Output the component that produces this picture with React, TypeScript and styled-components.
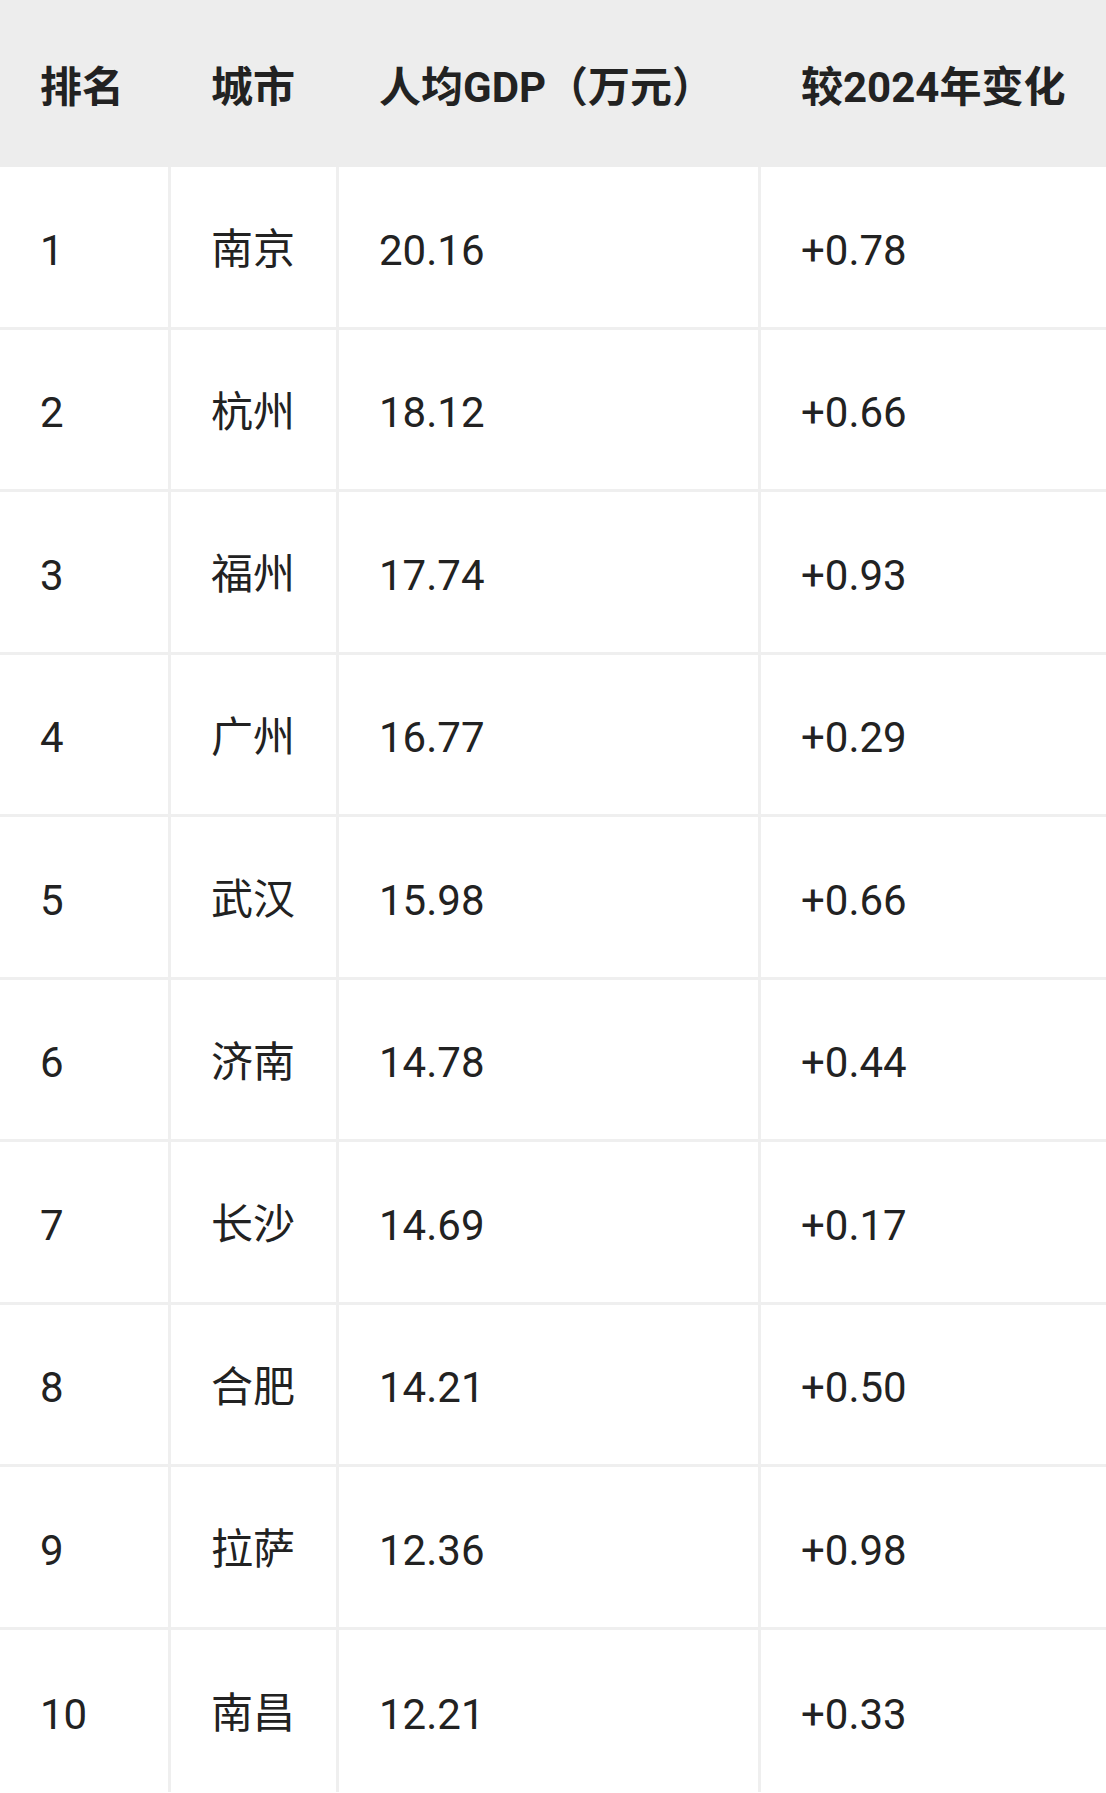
import React from "react";
import styled, { createGlobalStyle } from "styled-components";

const GlobalStyle = createGlobalStyle`
  html, body {
    margin: 0;
    padding: 0;
    background: #ffffff;
  }
  body {
    font-family: "Roboto", "Noto Sans CJK SC", "Noto Sans", sans-serif;
    color: #222222;
  }
`;

const Table = styled.div`
  width: 1106px;
  display: flex;
  flex-direction: column;
`;

const Row = styled.div<{ $header?: boolean }>`
  display: grid;
  grid-template-columns: 171px 168px 422px 1fr;
  box-sizing: border-box;
  height: ${(p) => (p.$header ? "167px" : "162.5px")};
  background: ${(p) => (p.$header ? "#ededed" : "#ffffff")};
  border-bottom: ${(p) => (p.$header ? "none" : "3px solid #efefef")};
  &:last-child {
    border-bottom: none;
  }
`;

const Cell = styled.div<{ $header?: boolean; $last?: boolean; $num?: boolean }>`
  display: flex;
  align-items: center;
  box-sizing: border-box;
  padding-left: 40px;
  padding-top: ${(p) => (p.$num ? "7px" : p.$header ? "0" : "0")};
  padding-bottom: ${(p) => (!p.$num && !p.$header ? "2px" : "0")};
  font-size: 42px;
  font-weight: ${(p) => (p.$header ? 700 : 400)};
  color: #222222;
  white-space: nowrap;
  border-right: ${(p) =>
    p.$header || p.$last ? "none" : "3px solid #efefef"};
`;

const data: [string, string, string, string][] = [
  ["1", "南京", "20.16", "+0.78"],
  ["2", "杭州", "18.12", "+0.66"],
  ["3", "福州", "17.74", "+0.93"],
  ["4", "广州", "16.77", "+0.29"],
  ["5", "武汉", "15.98", "+0.66"],
  ["6", "济南", "14.78", "+0.44"],
  ["7", "长沙", "14.69", "+0.17"],
  ["8", "合肥", "14.21", "+0.50"],
  ["9", "拉萨", "12.36", "+0.98"],
  ["10", "南昌", "12.21", "+0.33"],
];

const headers = ["排名", "城市", "人均GDP（万元）", "较2024年变化"];

export default function App() {
  return (
    <>
      <GlobalStyle />
      <Table>
        <Row $header>
          {headers.map((h) => (
            <Cell key={h} $header>
              {h}
            </Cell>
          ))}
        </Row>
        {data.map((r) => (
          <Row key={r[0]}>
            {r.map((v, i) => (
              <Cell key={i} $num={i !== 1} $last={i === r.length - 1}>
                {v}
              </Cell>
            ))}
          </Row>
        ))}
      </Table>
    </>
  );
}
